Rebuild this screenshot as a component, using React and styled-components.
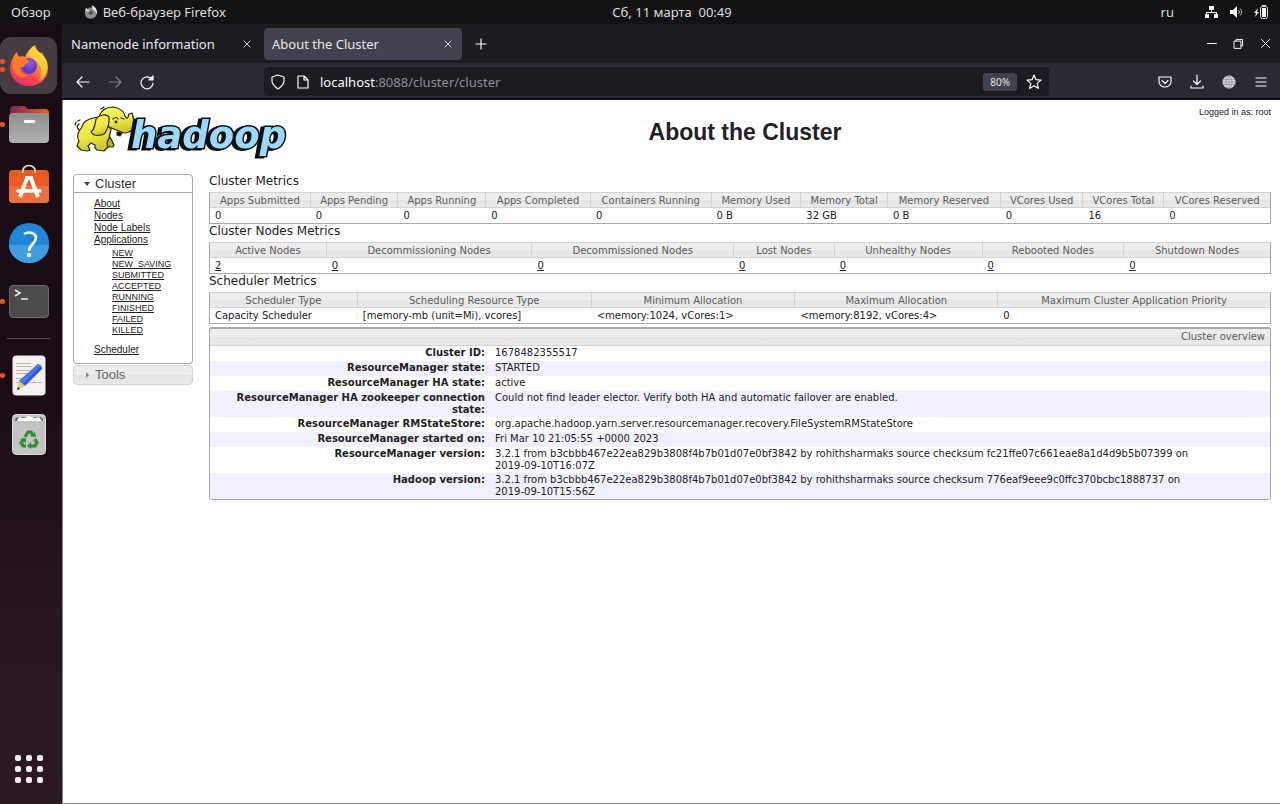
import React from 'react';
import styled, { createGlobalStyle, css } from 'styled-components';

const UI = '"Noto Sans", "Open Sans", sans-serif';
const SANS = '"DejaVu Sans", sans-serif';
const ARIAL = '"Liberation Sans", Arial, sans-serif';

const GlobalStyle = createGlobalStyle`
  * { box-sizing: border-box; }
  body { margin: 0; background: #fff; }
  button { border: 0; padding: 0; margin: 0; background: none; color: inherit; font: inherit; cursor: pointer; }
  svg { display: block; }
`;

const Desktop = styled.div`
  display: flex;
  flex-direction: column;
  min-height: 100vh;
  font-family: ${UI};
  font-size: 13px;
`;

const TopBar = styled.header`
  display: grid;
  grid-template-columns: 1fr auto 1fr;
  align-items: center;
  height: 24px;
  padding: 0 11px;
  background: #131313;
  color: #dedede;
  font-size: 13px;
  line-height: 24px;
`;

const TopGroup = styled.div`
  display: flex;
  align-items: center;
  justify-content: ${(p) => (p.$end ? 'flex-end' : 'flex-start')};
  gap: ${(p) => (p.$end ? '10px' : '33px')};
`;

const TopButton = styled.button`
  display: flex;
  align-items: center;
  gap: 5px;
  ${(p) => p.$spaced && css`margin-right: 20px;`}
`;

const Clock = styled(TopButton)`
  margin-left: 64px;
`;

const Workspace = styled.div`
  display: flex;
  flex: 1;
`;

const Dock = styled.nav`
  display: flex;
  flex-direction: column;
  gap: 2px;
  width: 62px;
  flex: none;
  padding: 13px 5px 7px 0;
  background: linear-gradient(#180b14 0%, #1b0d16 50%, #2b1722 85%, #2a1822 100%);
`;

const DockButton = styled.button`
  position: relative;
  display: flex;
  align-items: center;
  justify-content: center;
  height: 57px;
  border-radius: 11px;
  background: ${(p) => (p.$active ? '#473c43' : 'transparent')};
  ${(p) => p.$last && css`margin-top: auto;`}
`;

const Dots = styled.span`
  position: absolute;
  left: 0;
  top: 0;
  bottom: 0;
  display: flex;
  flex-direction: column;
  justify-content: center;
  gap: 3px;
`;

const Dot = styled.i`
  width: 5px;
  height: 5px;
  border-radius: 2px 3px 3px 2px;
  background: #e2571f;
`;

const DockRule = styled.hr`
  width: 43px;
  height: 1px;
  margin: 6px 7px;
  border: 0;
  background: #54474e;
`;

const BrowserWindow = styled.main`
  display: flex;
  flex: 1;
  flex-direction: column;
  min-width: 0;
`;

const TabStrip = styled.div`
  display: flex;
  align-items: center;
  height: 39px;
  padding: 0 8px 0 1px;
  background: #1c1b22;
  color: #fbfbfe;
`;

const Tab = styled.div`
  display: flex;
  align-items: center;
  justify-content: space-between;
  width: 198px;
  height: 32px;
  margin-right: 3px;
  padding: 0 8px;
  border-radius: 4px;
  color: #e8e8ee;
  background: ${(p) => (p.$active ? '#42414d' : 'transparent')};
`;

const TabLabel = styled.button`
  line-height: 20px;
`;

const TabTools = styled.div`
  display: flex;
  align-items: center;
  flex: 1;
  padding-left: 8px;
`;

const WindowControls = styled.div`
  display: flex;
  align-items: center;
  gap: 14px;
`;

const NavBar = styled.div`
  display: flex;
  align-items: center;
  height: 37px;
  padding: 2px 11px 0 13px;
  border-bottom: 2px solid #0c0c10;
  background: #2b2a33;
  color: #fbfbfe;
`;

const NavGroup = styled.div`
  display: flex;
  align-items: center;
  gap: 16px;
`;

const IconButton = styled.button`
  display: flex;
  opacity: ${(p) => (p.$dim ? 0.4 : 1)};
`;

const AddressBar = styled.div`
  display: flex;
  align-items: center;
  flex: 1;
  height: 29px;
  margin: 0 108px 0 109px;
  padding: 0 7px 0 6px;
  gap: 9px;
  border-radius: 4px;
  background: #1c1b22;
  color: #fbfbfe;
`;

const AddressText = styled.div`
  flex: 1;
  color: #8f8e97;
  line-height: 20px;
`;

const Host = styled.span`
  color: #fbfbfe;
`;

const ZoomBadge = styled.button`
  height: 18px;
  padding: 0 7px;
  border-radius: 3px;
  background: #42414d;
  color: #e4e4ea;
  font-size: 10px;
  line-height: 18px;
`;

const Page = styled.div`
  display: flex;
  flex: 1;
  flex-direction: column;
  padding: 0 9px 0 10px;
  border-left: 1px solid #8d8789;
  border-bottom: 1px solid #8d8789;
  background: #fff;
  color: #222;
  font-family: ${SANS};
  font-size: 10px;
  line-height: 12px;
`;

const PageHeader = styled.header`
  display: grid;
  grid-template-columns: 220px 1fr 98px;
  align-items: start;
  height: 74px;
  padding-top: 6px;
`;

const PageTitle = styled.h1`
  margin: 13px 0 0;
  padding-left: 24px;
  text-align: center;
  font: bold 23px/26px ${ARIAL};
`;

const Login = styled.div`
  font: 9px/12px ${ARIAL};
  text-align: right;
`;

const Columns = styled.div`
  display: flex;
  align-items: flex-start;
  gap: 16px;
`;

const SideMenu = styled.nav`
  width: 120px;
  flex: none;
  font-family: ${ARIAL};
`;

const MenuHead = styled.button`
  display: flex;
  align-items: center;
  gap: 5px;
  width: 100%;
  height: ${(p) => (p.$open ? 19 : 20)}px;
  padding-left: 10px;
  border: 1px solid ${(p) => (p.$open ? '#aaa' : '#d3d3d3')};
  border-radius: ${(p) => (p.$open ? '4px 4px 0 0' : '4px')};
  background: ${(p) => (p.$open ? '#fff' : 'linear-gradient(#ededed 50%, #e4e4e4 50%, #e9e9e9)')};
  color: ${(p) => (p.$open ? '#333' : '#666')};
  font: 13px/16px ${ARIAL};
`;

const MenuBody = styled.div`
  margin-bottom: 1px;
  padding: 5px 0 7px 20px;
  border: 1px solid #aaa;
  border-top: 0;
  border-radius: 0 0 4px 4px;
`;

const MenuList = styled.ul`
  margin: 0;
  padding: 0 0 0 ${(p) => (p.$nested ? 18 : 0)}px;
  list-style: none;
  font-size: ${(p) => (p.$nested ? 9 : 10)}px;
  line-height: ${(p) => (p.$nested ? 11 : 12)}px;
  ${(p) => p.$nested && css`margin: 2px 0 8px;`}
`;

const Link = styled.a`
  color: #222;
  text-decoration: underline;
`;

const Content = styled.section`
  flex: 1;
  min-width: 0;
`;

const SectionTitle = styled.h2`
  margin: 0;
  padding-bottom: 4px;
  font: 12px/14px ${SANS};
`;

const headFill = 'linear-gradient(#ededed 50%, #e5e5e5 50%, #eaeaea)';

const MetricsTable = styled.table`
  width: 100%;
  table-layout: fixed;
  border-spacing: 0;
  border: 1px solid #aaa;
  border-top-color: #d3d3d3;
`;

const Col = styled.col`
  width: ${(p) => p.$share}%;
`;

const HeadCell = styled.th`
  height: 15px;
  padding: 1px 0 0;
  border-right: 1px solid #d3d3d3;
  border-bottom: 1px solid #d3d3d3;
  background: ${headFill};
  color: #5c5c5c;
  font-weight: normal;
  white-space: nowrap;
  &:last-child { border-right: 0; }
`;

const BodyCell = styled.td`
  height: 15px;
  padding: 1px 5px 0;
  white-space: nowrap;
`;

const Overview = styled.section`
  margin-top: 3px;
  border: 1px solid #aaa;
  border-top-width: 2px;
  border-radius: 3px;
  overflow: hidden;
`;

const OverviewTitle = styled.h2`
  margin: 0;
  padding: 0 5px 0 0;
  border-bottom: 1px solid #d3d3d3;
  background: ${headFill};
  color: #5c5c5c;
  text-align: right;
  font: 10px/16px ${SANS};
`;

const InfoTable = styled.table`
  width: 100%;
  border-spacing: 0;
`;

const InfoRow = styled.tr`
  height: 15px;
  vertical-align: top;
  &:nth-child(even) { background: #f1f0ff; }
`;

const InfoLabel = styled.th`
  width: 280px;
  padding: 1px 5px 1px 10px;
  text-align: right;
`;

const InfoValue = styled.td`
  padding: 1px 60px 1px 5px;
`;

const line = { fill: 'none', stroke: 'currentColor', strokeLinecap: 'round', strokeLinejoin: 'round' };

const Glyph = ({ size = 16, w = 1.2, children }) => (
  <svg width={size} height={size} viewBox="0 0 16 16" {...line} strokeWidth={w}>{children}</svg>
);

const CloseIcon = () => <Glyph size={12}><path d="M4 4l8 8M12 4l-8 8" /></Glyph>;

const SmallFirefox = () => (
  <svg width="14" height="14" viewBox="0 0 40 40">
    <path d="M3 13l3-6 4 5 6-6 4 3 4-8c8 6 14 11 13 22-1 10-8 16-17 16C9 39 2 32 3 22z" fill="#8f8f8f" />
    <path d="M12 17c4-4 12-1 14 4 1 6-6 9-10 6-3-2-4-5-4-10z" fill="#555" />
    <path d="M24 1c9 7 15 14 12 26-1-8-7-12-12-16z" fill="#eee" />
    <path d="M4 14l3-6 4 5c4-1 5 1 6 4l-6 4z" fill="#c8c8c8" />
  </svg>
);

const FirefoxIcon = () => (
  <svg width="40" height="42" viewBox="0 0 40 42">
    <defs>
      <linearGradient id="ffBody" x1=".85" y1="0" x2=".3" y2="1">
        <stop offset="0" stopColor="#ffe84a" /><stop offset=".4" stopColor="#ff9a26" />
        <stop offset=".72" stopColor="#ff4a48" /><stop offset="1" stopColor="#e62b78" />
      </linearGradient>
      <radialGradient id="ffGlobe" cx=".55" cy=".3"><stop offset="0" stopColor="#9a5cf5" /><stop offset="1" stopColor="#5a3cc4" /></radialGradient>
    </defs>
    <path d="M4 13c1-3 2-4 4-6 0 2 1 4 2 5 2-1 4-1 6 0 2-5 5-9 10-12 0 4 2 6 5 8 1 0 1 0 1-1 4 5 7 9 7 16 0 11-9 18-19 18S1 34 1 23c0-4 1-7 3-10z" fill="url(#ffBody)" />
    <path d="M20 11c1-5 2-8 6-11 0 6 10 9 12 18 1 9-3 15-8 18 3-6 3-14-1-18-3-3-6-4-9-7z" fill="#ffd93b" opacity=".75" />
    <circle cx="20" cy="21" r="8" fill="url(#ffGlobe)" />
    <path d="M5 12c1-2 2-4 3-5 0 3 2 5 4 5 2-1 4 0 5 2 1 1 3 1 3 3-1 1-3 1-4 3-1 3-5 1-5 4 0 4 4 7 9 6-7 5-16 0-16-9 0-4 0-7 1-9z" fill="#ff7d28" />
  </svg>
);

const FilesIcon = () => (
  <svg width="40" height="37" viewBox="0 0 40 37">
    <defs>
      <linearGradient id="folderTab" x2="1"><stop stopColor="#7b2a52" /><stop offset="1" stopColor="#ef5a2b" /></linearGradient>
      <linearGradient id="folderBody" x2="0" y2="1"><stop stopColor="#8f8f8f" /><stop offset="1" stopColor="#b2b2b2" /></linearGradient>
    </defs>
    <path d="M1 4q0-4 4-4h10q2 0 3 2l1 1h17q4 0 4 4v10H1z" fill="url(#folderTab)" />
    <rect x="0" y="7" width="40" height="30" rx="4" fill="url(#folderBody)" />
    <rect x="15" y="14" width="11" height="3" rx="1" fill="#fff" />
  </svg>
);

const SoftwareIcon = () => (
  <svg width="40" height="40" viewBox="0 0 40 40">
    <rect y="6" width="40" height="33" rx="4" fill="#ea5a23" />
    <path d="M0 22h40v13q0 4-4 4H4q-4 0-4-4z" fill="#f0703c" />
    <path d="M14 9C12-1 28-1 26 9" fill="none" stroke="#f3dfc5" strokeWidth="1.6" />
    <g fill="none" stroke="#fff" strokeWidth="4"><path d="M18.500 13L11 33" /><path d="M21.500 13L29 33" /><path d="M9 27h22" strokeWidth="3.500" strokeLinecap="round" /></g>
    <path d="M16 12h8v4h-8z" fill="#fff" />
  </svg>
);

const HelpIcon = () => (
  <svg width="40" height="40" viewBox="0 0 40 40">
    <circle cx="20" cy="20" r="20" fill="#1f86d8" />
    <path d="M0 22a20 18 0 0 0 40 0z" fill="#3f9ce2" />
    <path d="M15 11c5-3 12-1 12 4 0 6-7 6-7 13" fill="none" stroke="#fff" strokeWidth="2.600" />
    <circle cx="20" cy="32" r="2.200" fill="#fff" />
  </svg>
);

const TerminalIcon = () => (
  <svg width="40" height="33" viewBox="0 0 40 33">
    <rect x=".5" y=".5" width="39" height="32" rx="3.500" fill="#4b4b4b" stroke="#696969" />
    <path d="M6 5l5 3-5 3M12 14h7" fill="none" stroke="#e8e8e8" strokeWidth="1.600" />
  </svg>
);

const EditorIcon = () => (
  <svg width="34" height="41" viewBox="0 0 34 41">
    <rect x=".5" y=".5" width="33" height="40" rx="4" fill="#f3f2f1" />
    <path d="M4 8.500h15M4 11.500h16M4 15.500h15M4 18.500h12M4 23.500h9M4 27.500h26" stroke="#c0b9a6" strokeWidth="1.200" />
    <path d="M26 9q4 1 4 5L13 31l-6-5z" fill="#2f5bd7" />
    <path d="M26 9l2 2-17 18-4-3z" fill="#4f79e8" />
    <path d="M7 26l6 5-8 4z" fill="#ecc183" /><path d="M5 35l1-3 2 2z" fill="#222" />
  </svg>
);

const TrashIcon = () => (
  <svg width="34" height="41" viewBox="0 0 34 41">
    <rect x=".5" y=".5" width="33" height="40" rx="4" fill="#c3c3c3" stroke="#dcdcdc" />
    <path d="M3 7q0-4 4-4h20q4 0 4 4z" fill="#666" /><path d="M5 7l2-4 5 1 5-2 6 2 4-1 3 4z" fill="#fff" />
    <g fill="none" stroke="#2f8f2c" strokeWidth="3.200">
      <path d="M13 23l3-5h3l2 4" /><path d="M23 25l2 4-2 3h-5" /><path d="M14 32h-3l-2-3 3-4" />
    </g>
    <g fill="#2f8f2c"><path d="M18 22l6 1-1-5z" /><path d="M19 28v7l-4-3z" /><path d="M8 25l6-1 0 5z" /></g>
  </svg>
);

const AppsIcon = () => (
  <svg width="28" height="28" viewBox="0 0 28 28" fill="#f1ecef">
    {[0, 11, 22].map((y) => [0, 11, 22].map((x) => <rect key={`${x}-${y}`} x={x} y={y} width="6" height="6" rx="2" />))}
  </svg>
);

const HadoopLogo = () => (
  <svg width="216" height="56" viewBox="0 0 216 56" role="img" aria-label="hadoop">
    <defs>
      <linearGradient id="hide" x2=".3" y2="1"><stop stopColor="#f8f56a" /><stop offset=".6" stopColor="#efea45" /><stop offset="1" stopColor="#cfc92c" /></linearGradient>
    </defs>
    <g fill="url(#hide)" stroke="#22220a" strokeWidth="1.200" strokeLinejoin="round" strokeLinecap="round">
      <path d="M9 25C4 24 3 20 6 18M2 19l1-3M5 15l2-1" fill="none" />
      <path d="M37 31l4 8-1 2-8 0-3-8z" fill="#bdb728" />
      <path d="M9 21c1-6 7-9 17-10l12 12-2 9-2 5 1 4-4 4-7-1-2-2 0-3-4-2-3 3 2 4-3 1-6-1-4-4 2-5c-3-5-1-9 3-14z" />
      <path d="M26 11C28 4 33 1 40 1c7 1 11 4 12 9 1 2 2 3 3 1l1-3 3-1c2 5 2 11 0 17-3 3-8 4-13 1l-10-4z" />
      <path d="M36 14c0 6-3 15-8 15-4 1-8 0-10-3 4-3 4-8 5-13 3-4 10-6 13-2z" />
      <path d="M40 13q3-3 5 0M48 12l3 1M28 3l3-2" fill="none" />
      <path d="M44 26l5 1-2 3-3-1z" fill="#16160a" />
    </g>
    <circle cx="43" cy="16" r="1.400" fill="#111" />
    <text x="58" y="42" fontFamily="DejaVu Sans" fontWeight="bold" fontStyle="italic" fontSize="37" fill="#9bd8fa" stroke="#0a0f14" strokeWidth="3" paintOrder="stroke" style={{ filter: 'drop-shadow(-3px 1px 0 #0a0f14)' }}>hadoop</text>
  </svg>
);

const dockTop = [
  ['Firefox', FirefoxIcon, 2, true],
  ['Files', FilesIcon, 1],
  ['Software', SoftwareIcon, 0],
  ['Help', HelpIcon, 0],
  ['Terminal', TerminalIcon, 1],
];
const dockBottom = [
  ['Text editor', EditorIcon, 1],
  ['Trash', TrashIcon, 0],
];

const DockItem = ({ item: [name, Icon, dots, active] }) => (
  <DockButton aria-label={name} $active={active}>
    <Dots>{Array.from({ length: dots }, (_, i) => <Dot key={i} />)}</Dots>
    <Icon />
  </DockButton>
);

const tables = [
  {
    title: 'Cluster Metrics',
    columns: [
      ['Apps Submitted', '0', 101], ['Apps Pending', '0', 88], ['Apps Running', '0', 88],
      ['Apps Completed', '0', 105], ['Containers Running', '0', 121], ['Memory Used', '0 B', 90],
      ['Memory Total', '32 GB', 87], ['Memory Reserved', '0 B', 113], ['VCores Used', '0', 83],
      ['VCores Total', '16', 81], ['VCores Reserved', '0', 106],
    ],
  },
  {
    title: 'Cluster Nodes Metrics',
    links: true,
    columns: [
      ['Active Nodes', '2', 117], ['Decommissioning Nodes', '0', 206], ['Decommissioned Nodes', '0', 202],
      ['Lost Nodes', '0', 101], ['Unhealthy Nodes', '0', 148], ['Rebooted Nodes', '0', 142], ['Shutdown Nodes', '0', 146],
    ],
  },
  {
    title: 'Scheduler Metrics',
    columns: [
      ['Scheduler Type', 'Capacity Scheduler', 148], ['Scheduling Resource Type', '[memory-mb (unit=Mi), vcores]', 234],
      ['Minimum Allocation', '<memory:1024, vCores:1>', 204], ['Maximum Allocation', '<memory:8192, vCores:4>', 203],
      ['Maximum Cluster Application Priority', '0', 272],
    ],
  },
];

const overview = [
  ['Cluster ID:', '1678482355517'],
  ['ResourceManager state:', 'STARTED'],
  ['ResourceManager HA state:', 'active'],
  ['ResourceManager HA zookeeper connection state:', 'Could not find leader elector. Verify both HA and automatic failover are enabled.'],
  ['ResourceManager RMStateStore:', 'org.apache.hadoop.yarn.server.resourcemanager.recovery.FileSystemRMStateStore'],
  ['ResourceManager started on:', 'Fri Mar 10 21:05:55 +0000 2023'],
  ['ResourceManager version:', '3.2.1 from b3cbbb467e22ea829b3808f4b7b01d07e0bf3842 by rohithsharmaks source checksum fc21ffe07c661eae8a1d4d9b5b07399 on ', '2019-09-10T16:07Z'],
  ['Hadoop version:', '3.2.1 from b3cbbb467e22ea829b3808f4b7b01d07e0bf3842 by rohithsharmaks source checksum 776eaf9eee9c0ffc370bcbc1888737 on ', '2019-09-10T15:56Z'],
];

const BuildDate = styled.time`
  white-space: nowrap;
`;

const Metrics = ({ title, columns, links }) => {
  const total = columns.reduce((sum, c) => sum + c[2], 0);
  return (
    <>
      <SectionTitle>{title}</SectionTitle>
      <MetricsTable aria-label={title}>
        <colgroup>{columns.map((c) => <Col key={c[0]} $share={(c[2] / total) * 100} />)}</colgroup>
        <thead><tr>{columns.map((c) => <HeadCell key={c[0]} scope="col">{c[0]}</HeadCell>)}</tr></thead>
        <tbody><tr>{columns.map((c) => <BodyCell key={c[0]}>{links ? <Link href="#nodes">{c[1]}</Link> : c[1]}</BodyCell>)}</tr></tbody>
      </MetricsTable>
    </>
  );
};

const MenuItem = ({ children, nested }) => <li><Link href={`#${children}`}>{children}</Link>{nested}</li>;

export default function App() {
  return (
    <Desktop>
      <GlobalStyle />
      <TopBar>
        <TopGroup>
          <TopButton>Обзор</TopButton>
          <TopButton><SmallFirefox />Веб-браузер Firefox</TopButton>
        </TopGroup>
        <Clock>Сб, 11 марта&nbsp; 00:49</Clock>
        <TopGroup $end>
          <TopButton $spaced>ru</TopButton>
          <TopButton aria-label="Network">
            <svg width="15" height="14" viewBox="0 0 15 14" fill="#f2f2f2"><path d="M5 1h5v4H5zM1 9h4v4H1zM10 9h4v4h-4zM7 5h1v2h5v2h-1V8H3v1H2V7h5z" /></svg>
          </TopButton>
          <TopButton aria-label="Volume">
            <svg width="15" height="14" viewBox="0 0 15 14" fill="#f2f2f2"><path d="M1 5h3l4-4v12L4 9H1z" /><path d="M9.500 5q2 2 0 4M11 3.500q3.500 3.500 0 7" fill="none" stroke="#bbb" /></svg>
          </TopButton>
          <TopButton aria-label="Battery">
            <svg width="15" height="14" viewBox="0 0 15 14"><path d="M4 3L0 8h2l-1 4 4-5H3z" fill="#f2f2f2" /><rect x="6.500" y="1.500" width="7" height="12" rx="2" fill="none" stroke="#ddd" /><rect x="8" y="3" width="4" height="9" fill="#f2f2f2" /><path d="M8 .5h4" stroke="#ddd" /></svg>
          </TopButton>
        </TopGroup>
      </TopBar>
      <Workspace>
        <Dock aria-label="Dock">
          {dockTop.map((item) => <DockItem key={item[0]} item={item} />)}
          <DockRule />
          {dockBottom.map((item) => <DockItem key={item[0]} item={item} />)}
          <DockButton $last aria-label="Show applications"><AppsIcon /></DockButton>
        </Dock>
        <BrowserWindow>
          <TabStrip>
            <Tab><TabLabel>Namenode information</TabLabel><IconButton aria-label="Close tab"><CloseIcon /></IconButton></Tab>
            <Tab $active><TabLabel>About the Cluster</TabLabel><IconButton aria-label="Close tab"><CloseIcon /></IconButton></Tab>
            <TabTools><IconButton aria-label="New tab"><Glyph><path d="M8 3v10M3 8h10" /></Glyph></IconButton></TabTools>
            <WindowControls>
              <IconButton aria-label="Minimize"><Glyph size={13}><path d="M3 8h11" /></Glyph></IconButton>
              <IconButton aria-label="Restore"><Glyph size={13}><path d="M3 5h8v9H3zM5 5V3h8v8h-2" /></Glyph></IconButton>
              <IconButton aria-label="Close"><Glyph size={13}><path d="M3 3l10 10M13 3L3 13" /></Glyph></IconButton>
            </WindowControls>
          </TabStrip>
          <NavBar>
            <NavGroup>
              <IconButton aria-label="Back"><Glyph><path d="M14 8H2M7 3L2 8l5 5" /></Glyph></IconButton>
              <IconButton aria-label="Forward" $dim><Glyph><path d="M2 8h12M9 3l5 5-5 5" /></Glyph></IconButton>
              <IconButton aria-label="Reload"><Glyph><path d="M13 5.500A6 6 0 1 0 14 9" /><path d="M14 2v4h-4z" fill="currentColor" /></Glyph></IconButton>
            </NavGroup>
            <AddressBar>
              <IconButton aria-label="Tracking protection"><Glyph><path d="M8 1l6 2v4c0 4-3 6-6 8-3-2-6-4-6-8V3z" /></Glyph></IconButton>
              <IconButton aria-label="Site information"><Glyph><path d="M3 2h6l4 4v8H3zM9 2v4h4" /></Glyph></IconButton>
              <AddressText><Host>localhost</Host>:8088/cluster/cluster</AddressText>
              <ZoomBadge>80%</ZoomBadge>
              <IconButton aria-label="Bookmark"><Glyph><path d="M8 1l2 4.700 5 .4-3.800 3.300L12.400 14.500 8 11.800l-4.400 2.700 1.200-5.100L1 6.100l5-.4z" /></Glyph></IconButton>
            </AddressBar>
            <NavGroup>
              <IconButton aria-label="Pocket"><Glyph><path d="M2 3h12v4c0 8-12 8-12 0zM5 6.500l3 3 3-3" /></Glyph></IconButton>
              <IconButton aria-label="Downloads"><Glyph><path d="M8 1v9M4.500 7L8 10.500 11.500 7M2 12v2h12v-2" /></Glyph></IconButton>
              <IconButton aria-label="Extension"><Glyph w={0.7}><circle cx="8" cy="8" r="6.500" fill="#d8d8dc" stroke="none" /><g stroke="#8f8e96"><ellipse cx="8" cy="8" rx="3" ry="6.500" /><path d="M2 5.500h12M1.500 8h13M2 10.500h12M8 2v12" /></g></Glyph></IconButton>
              <IconButton aria-label="Menu"><Glyph><path d="M3 4h10M3 8h10M3 12h10" /></Glyph></IconButton>
            </NavGroup>
          </NavBar>
          <Page>
            <PageHeader>
              <HadoopLogo />
              <PageTitle>About the Cluster</PageTitle>
              <Login>Logged in as: root</Login>
            </PageHeader>
            <Columns>
              <SideMenu aria-label="Cluster">
                <MenuHead $open aria-expanded="true">
                  <svg width="6" height="4" viewBox="0 0 6 4"><path d="M0 0h6L3 4z" fill="#444" /></svg>Cluster
                </MenuHead>
                <MenuBody>
                  <MenuList>
                    <MenuItem>About</MenuItem>
                    <MenuItem>Nodes</MenuItem>
                    <MenuItem>Node Labels</MenuItem>
                    <MenuItem nested={
                      <MenuList $nested>
                        {['NEW', 'NEW_SAVING', 'SUBMITTED', 'ACCEPTED', 'RUNNING', 'FINISHED', 'FAILED', 'KILLED'].map((s) => <MenuItem key={s}>{s}</MenuItem>)}
                      </MenuList>
                    }>Applications</MenuItem>
                    <MenuItem>Scheduler</MenuItem>
                  </MenuList>
                </MenuBody>
                <MenuHead aria-expanded="false">
                  <svg width="6" height="6" viewBox="0 0 6 6"><path d="M2 0l3 3-3 3z" fill="#888" /></svg>Tools
                </MenuHead>
              </SideMenu>
              <Content>
                {tables.map((t) => <Metrics key={t.title} {...t} />)}
                <Overview>
                  <OverviewTitle>Cluster overview</OverviewTitle>
                  <InfoTable>
                    <tbody>
                      {overview.map(([label, value, date]) => (
                        <InfoRow key={label}>
                          <InfoLabel scope="row">{label}</InfoLabel>
                          <InfoValue>{value}{date && <BuildDate>{date}</BuildDate>}</InfoValue>
                        </InfoRow>
                      ))}
                    </tbody>
                  </InfoTable>
                </Overview>
              </Content>
            </Columns>
          </Page>
        </BrowserWindow>
      </Workspace>
    </Desktop>
  );
}
